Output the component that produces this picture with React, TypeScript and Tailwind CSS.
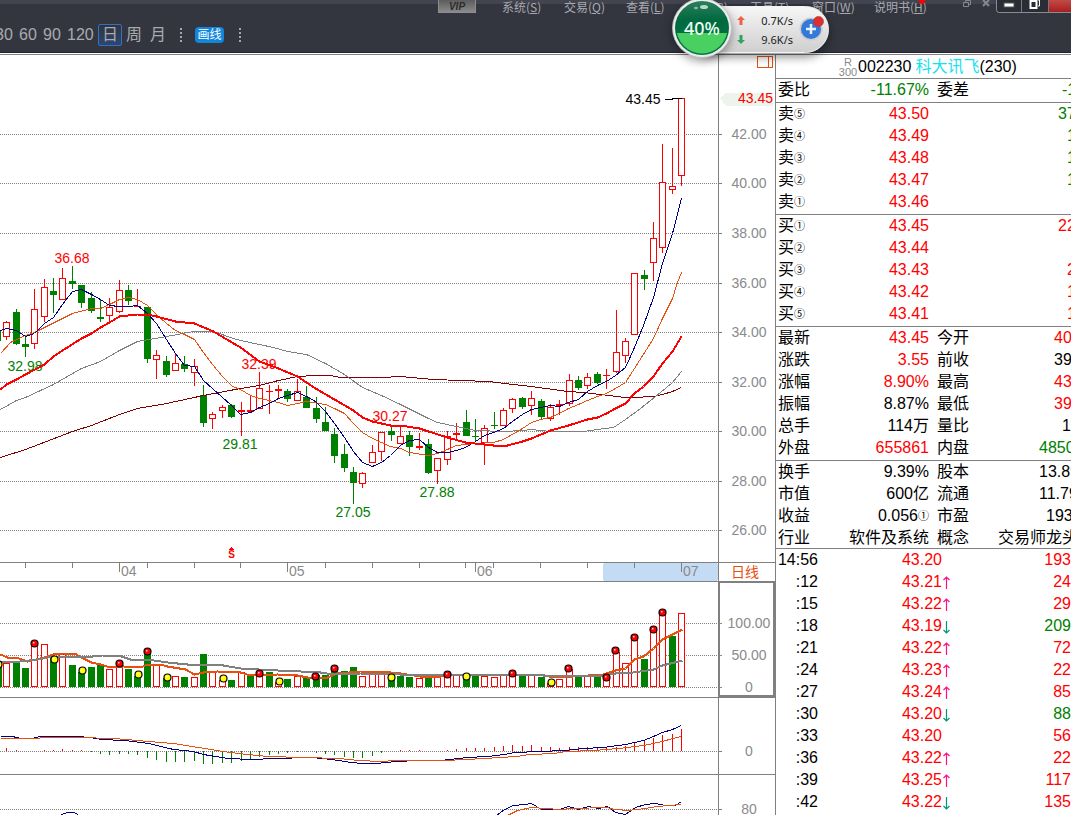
import React from "react";

type Tone = "r" | "g" | "k";
type Candle = [Tone, number, number, number, number];

const TONE: Record<Tone, string> = {
  r: "text-[#ff0000]",
  g: "text-[#008000]",
  k: "text-black",
};

const RED = "#ff0000";
const GREEN = "#008000";
const NAVY = "#000080";
const ORANGE = "#e8500f";
const GRAY = "#808080";

const barX = (i: number) => Math.floor(6.7 + i * 9.375);

// tone, high, body top, body bottom, low
const CANDLES: Candle[] = [
  ["r", 321, 322, 336, 340], ["g", 309, 312, 344, 345], ["g", 335, 344, 347, 357], ["r", 289, 309, 343, 349],
  ["r", 279, 287, 316, 322], ["g", 278, 291, 295, 313], ["r", 268, 278, 299, 299], ["g", 266, 281, 284, 289],
  ["g", 285, 285, 303, 308], ["g", 292, 298, 311, 313], ["g", 300, 317, 319, 322], ["r", 298, 307, 315, 321],
  ["r", 280, 290, 311, 313], ["g", 285, 290, 301, 305], ["r", 289, 306, 307, 307], ["g", 307, 307, 359, 363],
  ["r", 350, 355, 359, 379], ["g", 356, 361, 375, 377], ["r", 353, 363, 370, 370], ["g", 356, 364, 369, 372],
  ["r", 359, 366, 372, 386], ["g", 385, 395, 423, 427], ["r", 412, 414, 418, 429], ["r", 405, 407, 410, 418],
  ["g", 404, 405, 417, 418], ["r", 402, 410, 412, 436], ["r", 395, 410, 412, 413], ["r", 372, 388, 408, 408],
  ["r", 385, 391, 391, 414], ["r", 385, 389, 391, 398], ["g", 389, 391, 399, 402], ["r", 379, 391, 400, 400],
  ["g", 386, 397, 408, 408], ["g", 397, 408, 419, 423], ["g", 407, 422, 431, 431], ["g", 428, 434, 456, 463],
  ["g", 444, 454, 468, 472], ["g", 467, 472, 483, 504], ["r", 472, 473, 483, 488], ["r", 445, 452, 462, 462],
  ["r", 432, 432, 451, 461], ["g", 425, 431, 435, 441], ["r", 426, 436, 443, 443], ["g", 431, 435, 447, 456],
  ["r", 433, 446, 448, 450], ["g", 439, 444, 473, 474], ["r", 458, 458, 470, 484], ["r", 431, 436, 459, 465],
  ["r", 423, 433, 435, 439], ["g", 410, 422, 436, 436], ["g", 419, 436, 437, 441], ["r", 425, 428, 442, 465],
  ["g", 412, 425, 426, 429], ["r", 408, 410, 425, 425], ["r", 398, 399, 408, 413], ["g", 397, 398, 407, 409],
  ["r", 391, 398, 405, 415], ["g", 399, 401, 417, 420], ["r", 404, 407, 418, 421], ["r", 400, 404, 406, 415],
  ["r", 374, 380, 403, 406], ["g", 376, 380, 388, 390], ["r", 373, 377, 385, 389], ["g", 372, 374, 383, 384],
  ["r", 369, 375, 375, 389], ["r", 310, 352, 371, 373], ["r", 338, 341, 355, 363], ["r", 273, 273, 334, 334],
  ["g", 270, 275, 279, 290], ["r", 222, 238, 262, 281], ["r", 144, 182, 247, 253], ["r", 148, 186, 189, 194],
  ["r", 98, 98, 175, 186],
];

const MA5 = "0,330 6,328 16,330 25,336 34,333 44,323 53,317 62,304 72,291 81,289 91,294 100,299 109,305 119,306 128,306 137,305 147,313 156,323 166,339 175,353 184,365 194,366 203,380 212,388 222,397 231,405 240,414 250,412 259,407 269,403 278,398 287,395 297,392 306,396 315,401 325,411 334,423 344,437 353,451 362,462 372,466 381,462 390,455 400,445 409,440 419,439 428,447 437,452 447,452 456,450 465,447 475,441 484,435 493,432 503,428 512,421 522,414 531,409 540,407 550,405 559,406 568,402 578,399 587,391 597,385 606,381 615,375 625,367 634,347 643,325 653,297 662,263 672,233 681,198";
const MA10 = "0,353 10,342 25,335 34,332 44,327 62,318 72,313 91,308 100,308 109,304 119,299 128,297 137,299 147,305 156,314 166,323 175,330 184,334 194,339 203,352 212,364 222,376 232,386 240,389 250,395 259,398 278,402 287,405 297,403 306,401 325,404 334,408 344,413 353,423 362,432 372,438 390,446 400,448 409,452 428,455 437,453 447,449 456,445 465,444 475,443 493,442 503,439 522,428 531,422 540,419 550,417 559,413 568,408 578,404 587,400 597,396 606,393 615,388 625,382 634,368 653,338 662,318 672,298 677,282 681,272";
const MA20 = "0,389 6,384 16,379 25,374 44,364 53,356 62,350 81,338 91,333 100,327 109,322 119,316 128,315 137,314 147,314 156,316 175,321 194,323 213,331 223,337 240,347 259,361 278,368 297,376 306,382 315,388 334,399 353,410 362,417 372,421 381,423 390,425 400,425 419,428 428,431 447,437 465,442 484,444 493,445 507,445 522,441 531,438 550,430 568,425 587,419 597,417 606,413 615,408 625,403 634,393 643,386 653,376 662,363 672,351 681,336";
const MA30 = "0,409 16,400 25,397 53,384 81,368 100,361 119,350 137,341 166,336 193,331 213,331 233,338 240,340 259,344 273,347 287,351 306,354 325,363 344,374 362,387 381,395 400,404 428,418 437,422 456,426 475,430 503,431 522,430 531,429 550,431 583,431 597,429 613,427 625,419 640,408 650,400 660,392 672,382 681,371";
const MA60 = "0,457 25,449 72,431 91,425 119,414 137,408 166,403 203,395 240,388 259,385 278,380 297,376 315,375 330,375 340,377 381,377 400,376 433,379 488,381 513,384 531,386 567,391 583,392 600,394 625,397 633,397 653,396 662,394 672,391 681,387";

const PRICE_TICKS: [number, string][] = [
  [134, "42.00"], [183, "40.00"], [233, "38.00"], [283, "36.00"], [332, "34.00"],
  [382, "32.00"], [431, "30.00"], [481, "28.00"], [530, "26.00"],
];

const PRICE_NOTES: [number, number, string, string][] = [
  [72, 263, "36.68", RED], [25, 371, "32.98", GREEN], [259, 369, "32.39", RED], [240, 449, "29.81", GREEN],
  [390, 421, "30.27", RED], [353, 517, "27.05", GREEN], [437, 497, "27.88", GREEN], [643, 104, "43.45", "#000000"],
];

const VOLUMES: [Tone, number][] = [
  ["r", 663], ["g", 663], ["g", 668], ["r", 646], ["r", 644], ["g", 656], ["r", 654], ["g", 665], ["g", 672], ["g", 667],
  ["g", 665], ["r", 669], ["r", 665], ["g", 669], ["g", 676], ["g", 654], ["r", 665], ["g", 678], ["r", 676], ["g", 677],
  ["r", 677], ["g", 654], ["r", 672], ["r", 680], ["g", 680], ["r", 672], ["g", 675], ["r", 674], ["g", 672], ["r", 682],
  ["g", 679], ["r", 676], ["g", 677], ["g", 675], ["g", 675], ["g", 671], ["g", 671], ["g", 667], ["r", 676], ["r", 673],
  ["r", 674], ["g", 677], ["g", 676], ["g", 677], ["r", 678], ["g", 677], ["r", 677], ["r", 675], ["r", 675], ["g", 677],
  ["g", 674], ["r", 676], ["r", 677], ["r", 675], ["r", 674], ["g", 676], ["r", 674], ["g", 677], ["r", 683], ["r", 679],
  ["r", 669], ["g", 676], ["r", 675], ["g", 675], ["r", 677], ["r", 652], ["r", 663], ["r", 638], ["g", 659], ["r", 630],
  ["r", 612], ["g", 636], ["r", 613],
];
const VOL_FAST = "0,654 7,657 16,657 27,661 40,658 53,654 63,653 74,653 83,658 91,662 100,664 110,667 123,666 140,667 147,664 160,664 167,666 185,669 194,674 203,672 217,671 240,672 250,675 277,674 297,675 307,677 327,677 337,673 360,671 380,671 400,673 420,676 440,676 460,674 475,674 493,675 517,674 540,674 553,677 573,676 603,674 615,670 625,668 634,659 643,656 653,648 662,639 672,634 682,629";
const VOL_SLOW = "0,662 20,661 37,659 53,656 92,656 102,655 118,655 130,659 147,659 167,662 187,664 213,664 223,665 240,668 277,670 300,671 320,672 333,674 360,673 380,673 400,674 540,674 543,675 603,675 615,673 633,672 653,669 662,665 682,660";
const PEAKS: [number, number][] = [
  [34, 643], [119, 663], [147, 651], [259, 673], [315, 676], [334, 668], [447, 674], [512, 673], [568, 668],
  [606, 677], [615, 650], [634, 637], [653, 629], [662, 612],
];
const TROUGHS: [number, number][] = [
  [-2, 664], [54, 659], [82, 670], [138, 674], [167, 677], [223, 678], [279, 681], [391, 677], [466, 676], [551, 682],
];

// histogram end for each bar; 751 is the zero line
const MACD_BARS = [
  748, 750, 751, 751, 750, 750, 749, 750, 750, 752, 754, 755, 754, 754, 755, 758, 760, 762, 762, 762,
  761, 764, 764, 763, 763, 761, 760, 757, 755, 754, 753, 752, 751, 753, 754, 755, 757, 758, 758, 756,
  753, 751, 750, 750, 750, 751, 751, 750, 749, 748, 748, 748, 747, 746, 745, 746, 745, 747, 747, 748,
  747, 747, 747, 747, 747, 747, 746, 742, 741, 738, 735, 734, 729,
];
const DIF = "0,736 12,736 20,738 31,738 40,736 58,736 77,736 89,737 101,739 124,740 133,741 148,743 173,749 193,751 203,754 227,758 252,759 274,758 311,757 331,759 351,762 361,763 376,763 386,762 395,761 419,760 440,760 467,757 487,756 504,754 514,752 539,751 564,750 583,748 603,747 625,744 643,740 653,736 662,732 672,729 681,725";
const DEA = "0,738 39,738 40,737 77,737 114,738 148,741 173,743 198,747 222,751 247,754 267,756 339,758 358,760 381,761 395,760 445,760 484,758 499,757 517,756 529,754 554,753 566,751 593,750 618,748 643,745 662,741 672,738 681,736";
const RSI_FAST = "496,815 504,809 513,805 525,804 531,803 541,809 559,809 568,806 578,809 588,806 598,808 607,806 615,812 625,814 635,807 645,804 655,803 665,805 675,805 681,801";
const RSI_SLOW = "507,815 517,810 531,807 559,809 573,808 606,807 615,809 627,810 645,808 657,806 681,804";

const SHORT_TICKS = [25, 72, 147, 194, 240, 325, 372, 419, 465, 493, 540, 587, 634];
const MONTHS: [number, string][] = [[119, "04"], [287, "05"], [475, "06"], [681, "07"]];

function Line({ points, color, width = 1 }: { points: string; color: string; width?: number }) {
  return <polyline points={points} fill="none" stroke={color} strokeWidth={width} transform="translate(0.5 0.5)" />;
}

function Grid({ ys }: { ys: number[] }) {
  return (
    <g stroke={GRAY} strokeDasharray="1 1">
      {ys.map((y) => <line key={y} x1="0" x2="718" y1={y + 0.5} y2={y + 0.5} />)}
    </g>
  );
}

function PriceChart() {
  return (
    <svg viewBox="0 55 718 507" preserveAspectRatio="xMaxYMin slice" className="block h-[507px] min-w-0 flex-1" shapeRendering="crispEdges" role="img" aria-label="日线">
      <Grid ys={PRICE_TICKS.map(([y]) => y)} />
      <rect x="0" y="331" width="1" height="10" fill={GREEN} />
      <g fontFamily="Liberation Sans, Arial, sans-serif" fontSize="14" textAnchor="middle">
        {PRICE_NOTES.map(([x, y, t, c]) => <text key={t} x={x} y={y} fill={c}>{t}</text>)}
      </g>
      {CANDLES.map(([tone, high, top, bottom, low], i) => {
        const x = barX(i);
        const c = tone === "r" ? RED : GREEN;
        const hollow = tone === "r" && bottom - top > 2;
        return (
          <g key={i}>
            <rect x={x} y={high} width="1" height={Math.max(top - high, 0)} fill={c} />
            <rect x={x} y={bottom} width="1" height={Math.max(low - bottom, 0)} fill={c} />
            {hollow
              ? <rect x={x - 2.5} y={top + 0.5} width="6" height={bottom - top} fill="#fff" stroke={c} />
              : <rect x={x - 3} y={top} width="7" height={Math.max(bottom - top, 1)} fill={c} />}
          </g>
        );
      })}
      <Line points={MA60} color="#800000" />
      <Line points={MA30} color={GRAY} />
      <Line points={MA10} color={ORANGE} />
      <Line points={MA5} color={NAVY} />
      <Line points={MA20} color={RED} width={2} />
      <rect x="665" y="99" width="8" height="1" fill="#000" />
      <rect x="672" y="98" width="10" height="1" fill="#000" />
      <path d="M231.5 547l2.500 3h-5z" fill={RED} />
      <text x="231.500" y="558" fill={RED} fontFamily="Liberation Sans, Arial, sans-serif" fontSize="10" fontWeight="700" textAnchor="middle">S</text>
    </svg>
  );
}

function PriceAxis() {
  return (
    <svg viewBox="718 55 57 507" className="block h-[507px] w-[57px] shrink-0" shapeRendering="crispEdges">
      <rect x="718" y="55" width="1" height="507" fill={GRAY} />
      <path d="M720 98.500l6-6h47v13h-47z" fill="#edf4eb" />
      <rect x="757.500" y="56.500" width="15" height="11" fill="none" stroke={ORANGE} />
      <rect x="768" y="57" width="1" height="11" fill={ORANGE} />
      <g fontFamily="Liberation Sans, Arial, sans-serif" fontSize="14" fill="#8a8a8a">
        {PRICE_TICKS.map(([y, t]) => (
          <g key={t}>
            <rect x="719" y={y} width="3" height="1" fill={GRAY} />
            <text x="749" y={y + 5} textAnchor="middle">{t}</text>
          </g>
        ))}
        <text x="773" y="103" textAnchor="end" fill={RED}>43.45</text>
      </g>
    </svg>
  );
}

function DateAxis() {
  return (
    <div className="flex h-5 border-y border-[#808080]">
      <svg viewBox="0 563 718 18" preserveAspectRatio="xMaxYMin slice" className="block h-[18px] min-w-0 flex-1" shapeRendering="crispEdges">
        <rect x="603" y="563" width="115" height="18" rx="3" fill="#c4dbf4" />
        {SHORT_TICKS.map((x) => <rect key={x} x={x} y="563" width="1" height="5" fill={GRAY} />)}
        {MONTHS.map(([x, t]) => (
          <g key={t}>
            <rect x={x} y="563" width="1" height="9" fill={GRAY} />
            <text x={x + 2} y="576" fontFamily="Liberation Sans, Arial, sans-serif" fontSize="14" fill="#8a8a8a">{t}</text>
          </g>
        ))}
      </svg>
      <div className="w-[57px] shrink-0 border-l border-[#808080] pr-1 text-center text-sm leading-[18px] text-[#e8500f]">日线</div>
    </div>
  );
}

function Marker({ x, y, color }: { x: number; y: number; color: string }) {
  return (
    <g shapeRendering="auto">
      <circle cx={x + 0.5} cy={y + 0.5} r="3.500" fill={color} stroke="#000" strokeWidth="1.200" />
      <rect x={x - 1} y={y - 1} width="1.500" height="1.500" fill="#fff" opacity="0.8" />
    </g>
  );
}

function VolumeChart() {
  return (
    <svg viewBox="0 582 718 115" preserveAspectRatio="xMaxYMin slice" className="block h-[115px] min-w-0 flex-1" shapeRendering="crispEdges">
      <Grid ys={[623, 655, 687]} />
      <rect x="0" y="664" width="2" height="23" fill={GREEN} />
      {VOLUMES.map(([tone, y], i) =>
        tone === "r"
          ? <rect key={i} x={barX(i) - 2.5} y={y + 0.5} width="6" height={686 - y} fill="#fff" stroke={RED} />
          : <rect key={i} x={barX(i) - 3} y={y} width="7" height={687 - y} fill={GREEN} />
      )}
      <Line points={VOL_FAST} color={ORANGE} width={2} />
      <Line points={VOL_SLOW} color={GRAY} width={2} />
      {PEAKS.map(([x, y]) => <Marker key={x} x={x} y={y} color={RED} />)}
      {TROUGHS.map(([x, y]) => <Marker key={x} x={x} y={y} color="#ffff00" />)}
    </svg>
  );
}

function VolumeAxis() {
  return (
    <svg viewBox="718 581 57 116" className="-mt-px block h-[116px] w-[57px] shrink-0" shapeRendering="crispEdges">
      <rect x="719" y="582" width="55" height="114" fill="none" stroke={GRAY} strokeWidth="2" />
      <g fontFamily="Liberation Sans, Arial, sans-serif" fontSize="14" fill="#8a8a8a" textAnchor="middle">
        <rect x="720" y="623" width="2" height="1" />
        <rect x="720" y="655" width="2" height="1" />
        <rect x="720" y="687" width="2" height="1" />
        <text x="749" y="628">100.00</text>
        <text x="749" y="660">50.00</text>
        <text x="749" y="692">0</text>
      </g>
    </svg>
  );
}

function MacdRow() {
  return (
    <div className="flex border-y border-[#808080]">
      <svg viewBox="0 698 718 76" preserveAspectRatio="xMaxYMin slice" className="block h-[76px] min-w-0 flex-1" shapeRendering="crispEdges">
        <Grid ys={[751]} />
        {MACD_BARS.map((y, i) =>
          y === 751 ? null : <rect key={i} x={barX(i)} y={Math.min(y, 751)} width="1" height={Math.abs(751 - y)} fill={y < 751 ? RED : GREEN} />
        )}
        <Line points={DIF} color={NAVY} />
        <Line points={DEA} color={ORANGE} />
      </svg>
      <svg viewBox="718 698 57 76" className="block h-[76px] w-[57px] shrink-0" shapeRendering="crispEdges">
        <rect x="718" y="698" width="1" height="76" fill={GRAY} />
        <rect x="719" y="751" width="3" height="1" fill={GRAY} />
        <text x="749" y="756" fontFamily="Liberation Sans, Arial, sans-serif" fontSize="14" fill="#8a8a8a" textAnchor="middle">0</text>
      </svg>
    </div>
  );
}

function RsiRow() {
  return (
    <div className="flex">
      <svg viewBox="0 775 718 40" preserveAspectRatio="xMaxYMin slice" className="block h-10 min-w-0 flex-1" shapeRendering="crispEdges">
        <Grid ys={[809]} />
        <Line points="60,815 63,813 68,812 73,812 76,813 78,815" color={NAVY} />
        <Line points={RSI_FAST} color={NAVY} />
        <Line points={RSI_SLOW} color={ORANGE} />
      </svg>
      <svg viewBox="718 775 57 40" className="block h-10 w-[57px] shrink-0" shapeRendering="crispEdges">
        <rect x="718" y="775" width="1" height="40" fill={GRAY} />
        <rect x="719" y="809" width="3" height="1" fill={GRAY} />
        <text x="749" y="814" fontFamily="Liberation Sans, Arial, sans-serif" fontSize="14" fill="#8a8a8a" textAnchor="middle">80</text>
      </svg>
    </div>
  );
}

interface QuoteRow {
  label: string;
  mark?: string;
  value: string;
  valueMark?: string;
  tone: Tone;
  label2?: string;
  value2?: string;
  tone2?: Tone;
  indent?: string;
}

const WEIBI: QuoteRow[] = [
  { label: "委比", value: "-11.67%", tone: "g", label2: "委差", value2: "-1", tone2: "g", indent: "pl-16" },
];
const ASKS: QuoteRow[] = [
  { label: "卖", mark: "⑤", value: "43.50", tone: "r", value2: "37", tone2: "g", indent: "pl-[60px]" },
  { label: "卖", mark: "④", value: "43.49", tone: "r", value2: "1", tone2: "g", indent: "pl-[69px]" },
  { label: "卖", mark: "③", value: "43.48", tone: "r", value2: "1", tone2: "g", indent: "pl-[69px]" },
  { label: "卖", mark: "②", value: "43.47", tone: "r", value2: "1", tone2: "g", indent: "pl-[69px]" },
  { label: "卖", mark: "①", value: "43.46", tone: "r" },
];
const BIDS: QuoteRow[] = [
  { label: "买", mark: "①", value: "43.45", tone: "r", value2: "22", tone2: "r", indent: "pl-[60px]" },
  { label: "买", mark: "②", value: "43.44", tone: "r" },
  { label: "买", mark: "③", value: "43.43", tone: "r", value2: "2", tone2: "r", indent: "pl-[69px]" },
  { label: "买", mark: "④", value: "43.42", tone: "r", value2: "1", tone2: "r", indent: "pl-[69px]" },
  { label: "买", mark: "⑤", value: "43.41", tone: "r", value2: "1", tone2: "r", indent: "pl-[69px]" },
];
const STATS: QuoteRow[] = [
  { label: "最新", value: "43.45", tone: "r", label2: "今开", value2: "40", tone2: "r", indent: "pl-14" },
  { label: "涨跌", value: "3.55", tone: "r", label2: "前收", value2: "39", tone2: "k", indent: "pl-14" },
  { label: "涨幅", value: "8.90%", tone: "r", label2: "最高", value2: "43", tone2: "r", indent: "pl-14" },
  { label: "振幅", value: "8.87%", tone: "k", label2: "最低", value2: "39", tone2: "r", indent: "pl-14" },
  { label: "总手", value: "114万", tone: "k", label2: "量比", value2: "1", tone2: "k", indent: "pl-16" },
  { label: "外盘", value: "655861", tone: "r", label2: "内盘", value2: "4850", tone2: "g", indent: "pl-[41px]" },
];
const BASICS: QuoteRow[] = [
  { label: "换手", value: "9.39%", tone: "k", label2: "股本", value2: "13.89", tone2: "k", indent: "pl-[41px]" },
  { label: "市值", value: "600亿", tone: "k", label2: "流通", value2: "11.79", tone2: "k", indent: "pl-[41px]" },
  { label: "收益", value: "0.056", valueMark: "①", tone: "k", label2: "市盈", value2: "193", tone2: "k", indent: "pl-12" },
  { label: "行业", value: "软件及系统", tone: "k", label2: "概念", value2: "交易师龙头", tone2: "k", indent: "pl-0" },
];

function QuoteTable({ rows }: { rows: QuoteRow[] }) {
  return (
    <table className="w-full table-fixed border-collapse">
      <colgroup>
        <col className="w-[50px]" />
        <col className="w-[103px]" />
        <col className="w-[69px]" />
        <col />
      </colgroup>
      <tbody>
        {rows.map((r, i) => (
          <tr key={i} className="h-[22px] whitespace-nowrap">
            <th scope="row" className="p-0 pl-0.5 text-left font-normal">
              <div className="flex h-[22px] items-center">
                {r.label}
                {r.mark && <span className="text-[11px] leading-none">{r.mark}</span>}
              </div>
            </th>
            <td className="p-0">
              <div className={`flex h-[22px] items-center justify-end ${TONE[r.tone]}`}>
                {r.value}
                {r.valueMark && <span className="text-[11px] leading-none">{r.valueMark}</span>}
              </div>
            </td>
            <th scope="row" className="p-0 pl-2 text-left font-normal">{r.label2}</th>
            <td className={`overflow-hidden p-0 ${r.indent ?? ""} ${TONE[r.tone2 ?? "k"]}`}>{r.value2}</td>
          </tr>
        ))}
      </tbody>
    </table>
  );
}

const TRADES: [string, string, string, string, Tone][] = [
  ["14:56", "43.20", "", "193", "r"],
  [":12", "43.21", "↑", "24", "r"],
  [":15", "43.22", "↑", "29", "r"],
  [":18", "43.19", "↓", "209", "g"],
  [":21", "43.22", "↑", "72", "r"],
  [":24", "43.23", "↑", "22", "r"],
  [":27", "43.24", "↑", "85", "r"],
  [":30", "43.20", "↓", "88", "g"],
  [":33", "43.20", "", "56", "r"],
  [":36", "43.22", "↑", "22", "r"],
  [":39", "43.25", "↑", "117", "r"],
  [":42", "43.22", "↓", "135", "r"],
];

function TradeArrow({ dir }: { dir: string }) {
  if (!dir) return null;
  return (
    <svg viewBox="0 0 8 14" className="mt-0.5 h-3.5 w-2" fill="none" role="img" aria-label={dir}>
      {dir === "↑"
        ? <path d="M4.500 13V1M1.500 4l3-3 3 3" stroke="#ff1080" strokeWidth="1.200" />
        : <path d="M4.500 1v12M1.500 10l3 3 3-3" stroke="#00947a" strokeWidth="1.200" />}
    </svg>
  );
}

function QuotePanel() {
  return (
    <aside className="w-[296px] shrink-0 overflow-hidden border-l border-[#808080] leading-[22px]">
      <h1 className="flex h-6 items-center border-b border-[#808080] pl-[62px] text-base whitespace-nowrap">
        <span className="flex w-5 flex-col items-center text-[11px] leading-[10px] text-[#8a8a8a]">
          <span>R</span>
          <span>300</span>
        </span>
        <span>002230</span>
        <span className="pl-1 text-[#19dff0]">科大讯飞</span>
        <span>(230)</span>
      </h1>
      <section className="h-6 border-b border-[#808080]"><QuoteTable rows={WEIBI} /></section>
      <section className="border-b border-[#808080] pb-px"><QuoteTable rows={ASKS} /></section>
      <section className="border-b border-[#808080] pb-px"><QuoteTable rows={BIDS} /></section>
      <section className="border-b border-[#808080] pb-px"><QuoteTable rows={STATS} /></section>
      <section className="h-[88px] border-b border-[#808080]"><QuoteTable rows={BASICS} /></section>
      <table className="w-full table-fixed border-collapse">
        <colgroup>
          <col className="w-[42px]" />
          <col className="w-[124px]" />
          <col className="w-[10px]" />
          <col />
        </colgroup>
        <tbody>
          {TRADES.map(([time, price, dir, vol, tone]) => (
            <tr key={time} className="h-[22px]">
              <td className="p-0 text-right">{time}</td>
              <td className="p-0 text-right text-[#ff0000]">{price}</td>
              <td className="p-0 align-middle"><TradeArrow dir={dir} /></td>
              <td className={`p-0 text-right ${TONE[tone]}`}>{vol}</td>
            </tr>
          ))}
        </tbody>
      </table>
    </aside>
  );
}

const MENUS: [string, string][] = [
  ["系统", "S"], ["交易", "Q"], ["查看", "L"], ["功能", "R"], ["工具", "T"], ["窗口", "W"], ["说明书", "H"],
];

function Dots() {
  return (
    <span className="flex w-0.5 flex-col gap-0.5">
      {[0, 1, 2, 3].map((n) => <span key={n} className="size-0.5 bg-[#a5a6aa]" />)}
    </span>
  );
}

function NetworkWidget() {
  return (
    <div className="absolute left-[672px] top-0 h-[60px] w-[158px]">
      <div className="absolute left-8 top-1.5 flex h-[47px] w-[125px] items-center rounded-r-full border border-[#f4f4f4] bg-linear-to-b from-[#f6f6f6] to-[#cfcfcf] pl-8 shadow-[0_4px_10px_rgba(0,0,0,0.45)]">
        <div className="flex flex-col gap-1">
          <svg viewBox="0 0 8 9" className="h-[9px] w-2"><path d="M4 0l4 4H5.500v5h-3V4H0z" fill="#f0604a" /></svg>
          <svg viewBox="0 0 8 9" className="mt-1.5 h-[9px] w-2"><path d="M4 9l4-4H5.500V0h-3v5H0z" fill="#2fa560" /></svg>
        </div>
        <div className="ml-4 w-8 text-right font-['Noto_Sans',sans-serif] text-[11px] leading-[19px] whitespace-nowrap text-[#1c1c1c]">
          <p>0.7K/s</p>
          <p>9.6K/s</p>
        </div>
        <button type="button" aria-label="加速" className="ml-1.5 pb-1">
          <svg viewBox="0 0 26 26" className="size-[26px]">
            <circle cx="12" cy="14" r="11.500" fill="#c9ccd0" />
            <circle cx="12" cy="14" r="10" fill="#3478d8" />
            <path d="M12 9v10M7 14h10" stroke="#e8f2ff" strokeWidth="2.500" />
            <circle cx="19.500" cy="6.500" r="5" fill="#dc3030" stroke="#b52a2a" strokeWidth="0.600" />
          </svg>
        </button>
      </div>
      <svg viewBox="0 0 60 60" className="absolute left-0 top-0 size-[60px] drop-shadow-[0_3px_5px_rgba(0,0,0,0.4)]">
        <defs>
          <linearGradient id="ballTop" x1="0" y1="0" x2="0" y2="1">
            <stop offset="0" stopColor="#2d7f5e" />
            <stop offset="0.350" stopColor="#00693f" />
            <stop offset="1" stopColor="#007a48" />
          </linearGradient>
          <clipPath id="ballLow"><rect x="0" y="33" width="60" height="27" /></clipPath>
        </defs>
        <circle cx="30" cy="28" r="29.500" fill="#ececec" stroke="#bdbdbd" strokeWidth="0.800" />
        <circle cx="30" cy="28" r="27" fill="url(#ballTop)" />
        <circle cx="30" cy="28" r="25.500" fill="#49d060" clipPath="url(#ballLow)" />
        <ellipse cx="32" cy="7" rx="4" ry="2" fill="#fff" opacity="0.700" />
        <ellipse cx="24" cy="8" rx="2" ry="1.200" fill="#fff" opacity="0.500" />
      </svg>
      <span className="absolute left-0 top-4 w-[60px] text-center font-['Noto_Sans',sans-serif] text-lg leading-6 font-medium text-[#eafff2]">40%</span>
    </div>
  );
}

function Header() {
  return (
    <header className="flex h-[53px] flex-col border-b border-[#25232f] bg-linear-to-b from-[#42454f] from-[4px] to-[#33363f] to-[4px] text-[#a9aab0]">
      <div className="flex h-[13px]">
        <div className="flex pl-[438px]">
          <button type="button" className="h-[13px] w-[38px] border border-t-0 border-[#8d8d8d] bg-linear-to-b from-[#5c5c5c] to-[#8a8a8a] text-center text-[10px] leading-[11px] font-bold text-[#2b2b2b] italic">VIP</button>
          <nav className="flex pl-[26px]">
            {MENUS.map(([name, key]) => (
              <button key={key} type="button" className="relative w-[62px] text-left font-['Noto_Sans_CJK_SC',sans-serif] text-xs leading-[13px] whitespace-nowrap">
                {name}(<u>{key}</u>)
                {key === "H" && <span className="absolute -top-0.5 left-[45px] size-[6px] rounded-full bg-[#ff0000]" />}
              </button>
            ))}
          </nav>
        </div>
        <div className="ml-auto flex shrink-0">
          <button type="button" aria-label="还原子窗口" className="flex w-[19px]">
            <svg viewBox="0 0 8 7" className="h-[7px] w-2" fill="none" stroke="#85878e"><path d="M.5 2.500h5v4h-5zM2.500 2V.5h5v4H6" /></svg>
          </button>
          <button type="button" aria-label="关闭子窗口" className="flex w-[14px]">
            <svg viewBox="0 0 8 7" className="h-[7px] w-2" stroke="#85878e" strokeWidth="2"><path d="M1 0l6 6M7 0L1 6" /></svg>
          </button>
          <div className="flex h-[13px] overflow-hidden rounded-bl border border-t-0 border-r-0 border-[#8b8d94]">
            <button type="button" aria-label="最小化" className="flex w-[25px] justify-center border-r border-[#77797f] bg-[#2b2d35]">
              <svg viewBox="0 0 12 8" className="h-2 w-3"><rect x="1" y="3" width="10" height="4" fill="#fff" stroke="#555" /></svg>
            </button>
            <button type="button" aria-label="还原" className="flex w-[27px] justify-center border-r border-[#77797f] bg-[#2b2d35]">
              <svg viewBox="0 0 12 9" className="h-[9px] w-3" fill="none" stroke="#fff"><path d="M1.500 1h6v7h-6z" strokeWidth="2" /><path d="M9 0h1.500v6H9" /></svg>
            </button>
            <button type="button" aria-label="关闭" className="w-[22px] bg-linear-to-b from-[#c04a48] to-[#a81c1c]" />
          </div>
        </div>
      </div>
      <div className="flex h-[39px] items-center pt-1 text-base leading-5">
        <button type="button" className="-ml-[5px] w-6 text-left">30</button>
        <button type="button" className="w-6 text-left">60</button>
        <button type="button" className="w-6 text-left">90</button>
        <button type="button" className="w-[31px] text-left">120</button>
        <button type="button" className="h-[22px] w-6 rounded-xs border border-[#2f72c4] bg-linear-to-b from-[#31343d] to-[#2c4672] text-center">日</button>
        <button type="button" className="w-7 pl-1 text-left">周</button>
        <button type="button" className="w-[30px] text-left">月</button>
        <span className="w-[15px]"><Dots /></span>
        <button type="button" className="h-4 w-[29px] rounded bg-[#1286dc] text-center text-xs leading-4 text-white">画线</button>
        <span className="pl-[15px]"><Dots /></span>
      </div>
    </header>
  );
}

export default function App() {
  return (
    <div className="relative overflow-hidden bg-white font-['Liberation_Sans','Noto_Sans_CJK_SC',sans-serif] text-base text-black">
      <Header />
      <main className="mt-px flex border-t border-[#808080]">
        <section className="min-w-0 flex-1">
          <div className="flex">
            <PriceChart />
            <PriceAxis />
          </div>
          <DateAxis />
          <div className="flex">
            <VolumeChart />
            <VolumeAxis />
          </div>
          <MacdRow />
          <RsiRow />
        </section>
        <QuotePanel />
      </main>
      <NetworkWidget />
    </div>
  );
}
